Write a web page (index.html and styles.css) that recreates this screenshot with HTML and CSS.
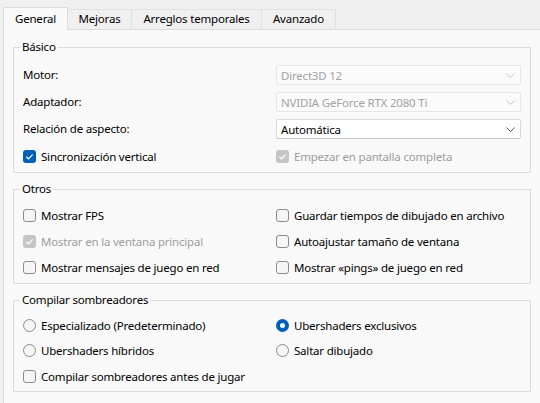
FILE: index.html
```html
<!DOCTYPE html>
<html lang="es">
<head>
<meta charset="utf-8">
<title>Gráficos</title>
<link rel="stylesheet" href="styles.css">
</head>
<body>
<div class="window">
  <div class="tabs">
    <div class="tab active tab-general">General</div>
    <div class="tab tab-mejoras">Mejoras</div>
    <div class="tab tab-arreglos">Arreglos temporales</div>
    <div class="tab tab-avanzado">Avanzado</div>
  </div>
  <div class="panel">
    <fieldset class="group group-basic">
      <legend>Básico</legend>
      <div class="grid grid-basic">
        <span class="label">Motor:</span>
        <div class="combo disabled"><span>Direct3D 12</span><svg class="chev" width="9" height="5" viewBox="0 0 9 5"><path d="M0.5 0.5 L4.5 4.5 L8.5 0.5" fill="none"/></svg></div>
        <span class="label">Adaptador:</span>
        <div class="combo disabled"><span>NVIDIA GeForce RTX 2080 Ti</span><svg class="chev" width="9" height="5" viewBox="0 0 9 5"><path d="M0.5 0.5 L4.5 4.5 L8.5 0.5" fill="none"/></svg></div>
        <span class="label">Relación de aspecto:</span>
        <div class="combo"><span>Automática</span><svg class="chev" width="9" height="5" viewBox="0 0 9 5"><path d="M0.5 0.5 L4.5 4.5 L8.5 0.5" fill="none"/></svg></div>
        <div class="check"><span class="box checked"><svg width="13" height="13" viewBox="0 0 13 13"><path d="M3.3 6.7 L5.5 8.8 L9.7 4.4" fill="none"/></svg></span><span>Sincronización vertical</span></div>
        <div class="check disabled"><span class="box checked"><svg width="13" height="13" viewBox="0 0 13 13"><path d="M3.3 6.7 L5.5 8.8 L9.7 4.4" fill="none"/></svg></span><span>Empezar en pantalla completa</span></div>
      </div>
    </fieldset>

    <fieldset class="group">
      <legend>Otros</legend>
      <div class="grid">
        <div class="check"><span class="box"></span><span>Mostrar FPS</span></div>
        <div class="check"><span class="box"></span><span>Guardar tiempos de dibujado en archivo</span></div>
        <div class="check disabled"><span class="box checked"><svg width="13" height="13" viewBox="0 0 13 13"><path d="M3.3 6.7 L5.5 8.8 L9.7 4.4" fill="none"/></svg></span><span>Mostrar en la ventana principal</span></div>
        <div class="check"><span class="box"></span><span>Autoajustar tamaño de ventana</span></div>
        <div class="check"><span class="box"></span><span>Mostrar mensajes de juego en red</span></div>
        <div class="check"><span class="box"></span><span>Mostrar «pings» de juego en red</span></div>
      </div>
    </fieldset>

    <fieldset class="group group-shaders">
      <legend>Compilar sombreadores</legend>
      <div class="grid">
        <div class="check"><span class="radio"></span><span>Especializado (Predeterminado)</span></div>
        <div class="check"><span class="radio selected"></span><span>Ubershaders exclusivos</span></div>
        <div class="check"><span class="radio"></span><span>Ubershaders híbridos</span></div>
        <div class="check"><span class="radio"></span><span>Saltar dibujado</span></div>
        <div class="check"><span class="box"></span><span>Compilar sombreadores antes de jugar</span></div>
      </div>
    </fieldset>
  </div>
</div>
</body>
</html>
```

FILE: styles.css
```css
* { box-sizing: border-box; }

html, body {
  margin: 0;
  padding: 0;
}

body {
  background: #f0f0f0;
  font-family: "Noto Sans", "Open Sans", sans-serif;
  font-size: 11.5px;
  letter-spacing: -0.2px;
  color: #000;
  width: 540px;
  height: 403px;
  overflow: hidden;
}

.window {
  padding-left: 3px;
}

.tabs {
  display: flex;
  align-items: flex-end;
  height: 29px;
}

.tab {
  height: 20px;
  line-height: 18px;
  text-align: center;
  background: #f0f0f0;
  border: 1px solid #e0e0e0;
  border-bottom: none;
  margin-left: -1px;
}

.tab:first-child { margin-left: 0; }

.tab.active {
  position: relative;
  z-index: 1;
  height: 23px;
  margin-bottom: -1px;
  line-height: 22px;
  background: #f9f9f9;
  border-color: #dcdcdc;
}

.tab-general { width: 65px; }
.tab-mejoras { width: 65px; }
.tab-arreglos { width: 131px; }
.tab-avanzado { width: 75px; }

.panel {
  background: #f9f9f9;
  border: 1px solid #dcdcdc;
  border-right: none;
  padding: 9px 6px 20px 9px;
  height: 380px;
}

.group {
  margin: 0 0 8px 0;
  width: 518px;
  border: 1px solid #dcdcdc;
  padding: 8px 9px 6px 9px;
  min-width: 0;
}

.group legend {
  line-height: 16px;
  padding: 0 2px;
  margin-left: -3px;
}

.group-basic {
  padding-top: 10px;
}

.group-shaders {
  padding-top: 7px;
  padding-bottom: 5px;
}

.grid {
  display: grid;
  grid-template-columns: 253px 1fr;
  grid-auto-rows: 20px;
  row-gap: 6px;
  align-items: center;
}

.grid-basic {
  row-gap: 7px;
}

.group-shaders .grid {
  row-gap: 5.5px;
}

.label {
  line-height: 20px;
}

.combo {
  height: 20px;
  display: flex;
  align-items: center;
  justify-content: space-between;
  padding: 0 5px 0 4px;
  background: #ffffff;
  border: 1px solid #d9d9d9;
  border-bottom-color: #c4c4c4;
  border-radius: 2px;
}

.combo .chev path {
  stroke: #5c5c5c;
  stroke-width: 1;
}

.combo.disabled {
  background: #fbfbfb;
  border-color: #e6e6e6;
  color: #a2a2a2;
}

.combo.disabled .chev path {
  stroke: #c4c4c4;
}

.check {
  display: flex;
  align-items: center;
  gap: 5px;
  height: 20px;
  white-space: nowrap;
}

.check.disabled {
  color: #9d9d9d;
}

.box {
  width: 13px;
  height: 13px;
  border: 1px solid #8b8b8b;
  border-radius: 3px;
  background: #f6f6f6;
  flex: none;
  display: flex;
}

.box.checked {
  border: none;
  background: #005fb8;
}

.box svg path {
  stroke: #ffffff;
  stroke-width: 1.2;
}

.check.disabled .box.checked {
  background: #c5c5c5;
}

.radio {
  width: 13px;
  height: 13px;
  border: 1px solid #8b8b8b;
  border-radius: 50%;
  background: #f6f6f6;
  flex: none;
}

.radio.selected {
  border: 4px solid #005fb8;
  background: #ffffff;
}
```
